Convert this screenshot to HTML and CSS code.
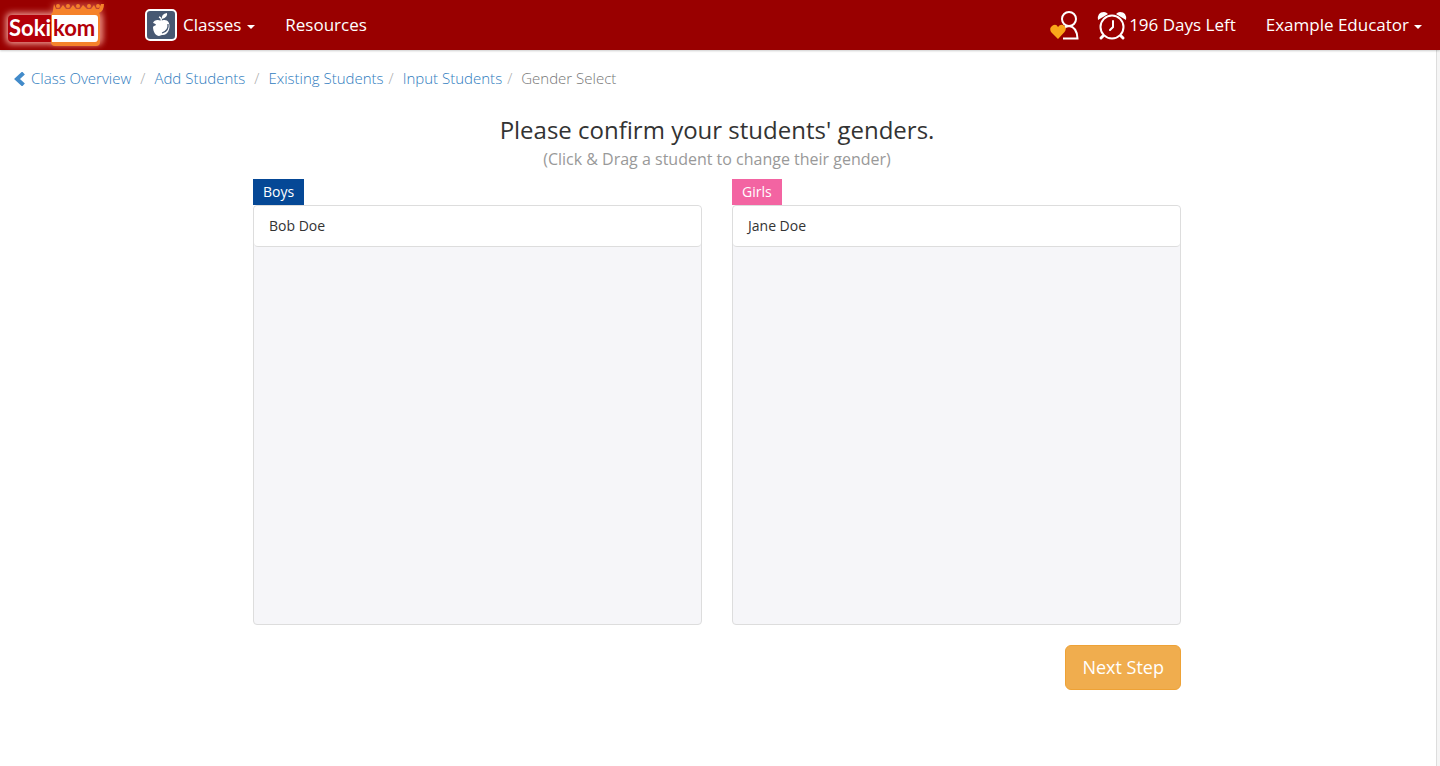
FILE: index.html
```html
<!DOCTYPE html>
<html lang="en">
<head>
  <meta charset="UTF-8" />
  <meta name="viewport" content="width=device-width, initial-scale=1" />
  <title>Sokikom - Gender Select</title>
  <link rel="stylesheet" href="styles.css">
</head>
<body>
  <header class="navbar">
    <a class="brand" href="#" aria-label="Sokikom">
      <svg width="112" height="50" viewBox="0 0 112 50">
        <defs>
          <filter id="glow" x="-20%" y="-40%" width="140%" height="180%">
            <feGaussianBlur stdDeviation="3" />
          </filter>
        </defs>
        <rect x="6" y="13" width="96" height="31" rx="5" fill="#f0a098" filter="url(#glow)" />
        <rect x="52" y="3" width="50" height="42" rx="4" fill="#e0705a" opacity=".6" filter="url(#glow)" />
        <rect x="8" y="15" width="46" height="27" rx="4" fill="#b30009" />
        <rect x="51" y="12" width="49" height="34" rx="4" fill="#f5822a" />
        <!-- row of people on top -->
        <g fill="#f5822a">
          <circle cx="58" cy="6" r="2" /><circle cx="68" cy="6" r="2" /><circle cx="78" cy="6" r="2" /><circle cx="89" cy="6" r="2" /><circle cx="98" cy="6" r="2" />
          <path d="M54 4l2 5h4l3-4 3 4h4l3-4 3 4h4l3-4 4 4h4l3-4 2 4h3l2-5h3q0 7-5 9v3H52z" />
        </g>
        <path d="M52 15h43q3 0 3 3v20q0 4-3 4H52z" fill="#fff" />
        <text class="logo-text" x="9" y="36" fill="#fff">Soki</text>
        <text class="logo-text" x="53" y="36" fill="#b30009">kom</text>
      </svg>
    </a>
    <nav class="menu">
      <a class="menu-link" href="#">
        <svg class="apple" width="32" height="32" viewBox="0 0 32 32">
          <rect x="1" y="1" width="30" height="30" rx="4" fill="#475872" stroke="#fff" stroke-width="2" />
          <path d="M17 10Q16 5 22 4Q23 8 17 10Z" fill="#fff" />
          <path d="M16 12C13 10 9 11 8 14C9 14 11 15 11 16C10 17 8 17 8 18C8 23 11 27 14 27C15 27 16 26 17 26C22 27 26 20 24 14C22 10 18 11 16 12Z" fill="#fff" />
          <path d="M14 8Q17 9 16 12" fill="none" stroke="#fff" stroke-width="1.5" />
          <path d="M23 15Q24 22 17 24" fill="none" stroke="#475872" stroke-width="1.3" />
        </svg>
        Classes <span class="caret"></span>
      </a>
      <a class="menu-link" href="#">Resources</a>
    </nav>
    <div class="account">
      <a class="friends" href="#" aria-label="Invite a friend">
        <svg width="32" height="32" viewBox="0 0 32 32">
          <g fill="none" stroke="#fff" stroke-width="2">
            <circle cx="20" cy="10" r="7" />
            <path d="M14 20Q17 17 20 17Q28 18 28.500 29.500H14" />
          </g>
          <path d="M9 30L2 23Q0 19 3 17Q7 14 9 18Q12 14 15.500 17Q18 20 15.500 23Z" fill="#faa61a" />
        </svg>
      </a>
      <a class="menu-link days" href="#">
        <svg width="30" height="32" viewBox="0 0 30 32">
          <path d="M1 11Q0 3 7 3Q9 3 11 5ZM29 11Q30 3 23 3Q21 3 19 5Z" fill="#fff" />
          <g fill="none" stroke="#fff" stroke-width="2" stroke-linecap="round">
            <circle cx="15" cy="18" r="11.500" />
            <path d="M16 12V18L13 21" />
            <path d="M6 27L4 29M24 27L26 29" stroke-width="3" />
          </g>
        </svg>
        196 Days Left
      </a>
      <a class="menu-link" href="#">Example Educator <span class="caret"></span></a>
    </div>
  </header>

  <main class="page">
    <ol class="breadcrumb">
      <li>
        <a href="#"><svg class="chevron" width="12" height="14" viewBox="0 0 12 14"><path d="M9.500 1L3 7L9.500 13" fill="none" stroke="#428bca" stroke-width="4" /></svg>Class Overview</a>
      </li>
      <li><a href="#">Add Students</a></li>
      <li><a href="#">Existing Students</a></li>
      <li class="tight"><a href="#">Input Students</a></li>
      <li class="tight active">Gender Select</li>
    </ol>

    <h1>Please confirm your students' genders.</h1>
    <p class="hint">(Click &amp; Drag a student to change their gender)</p>

    <div class="genders">
      <div class="columns">
        <section>
          <h2 class="tag boys">Boys</h2>
          <ul class="students">
            <li draggable="true">Bob Doe</li>
          </ul>
        </section>
        <section>
          <h2 class="tag girls">Girls</h2>
          <ul class="students">
            <li draggable="true">Jane Doe</li>
          </ul>
        </section>
      </div>
      <div class="actions">
        <button type="button" class="btn-next">Next Step</button>
      </div>
    </div>
  </main>
</body>
</html>
```
FILE: styles.css
```css
* {
  box-sizing: border-box;
}
body {
  margin: 0;
  min-height: 100vh;
  display: flex;
  flex-direction: column;
  background: #f5f5f5;
  color: #333;
  font-family: 'Open Sans', sans-serif;
  font-size: 14px;
  line-height: 20px;
}
a {
  color: #428bca;
  text-decoration: none;
}
.navbar {
  display: flex;
  align-items: center;
  height: 50px;
  background: #990000;
  box-shadow: 0 1px 2px rgba(0, 0, 0, 0.2);
  z-index: 1;
}
.brand {
  height: 50px;
  margin-right: 33px;
}
.logo-text {
  font-family: Lato, sans-serif;
  font-size: 22px;
  font-weight: 700;
}
.menu,
.account {
  display: flex;
  align-items: center;
  gap: 30px;
}
.account {
  margin-left: auto;
  padding-right: 18px;
}
.menu-link {
  display: flex;
  align-items: center;
  color: #fff;
  font-size: 17px;
}
.apple {
  margin-right: 6px;
}
.caret {
  margin: 4px 0 0 6px;
  border-top: 4px solid #fff;
  border-left: 4px solid transparent;
  border-right: 4px solid transparent;
}
.account .caret {
  margin-left: 5px;
}
.friends {
  height: 32px;
  margin-right: -14px;
}
.days svg {
  margin-right: 2px;
}
.page {
  flex: 1;
  margin-right: 3px;
  padding: 18px 2px 0 0;
  background: #fff;
  border-right: 1px solid #ddd;
}
.breadcrumb {
  display: flex;
  flex-wrap: wrap;
  margin: 0;
  padding: 0 14px;
  list-style: none;
  font-size: 15px;
  font-weight: 300;
}
.breadcrumb a {
  color: #2f7cbe;
}
.breadcrumb li + li::before {
  content: "/";
  padding: 0 9px;
  color: #aaa;
}
.breadcrumb li.tight::before {
  padding-left: 5px;
}
.breadcrumb .active {
  color: #777;
}
.chevron {
  margin-right: 5px;
  vertical-align: -2px;
}
h1 {
  margin: 26px 0 0;
  font-size: 24px;
  font-weight: 400;
  line-height: 32px;
  text-align: center;
}
.hint {
  margin: 1px 0 0;
  color: #999;
  font-size: 16px;
  line-height: 24px;
  text-align: center;
}
.genders {
  width: 66.6667%;
  margin: 8px auto 0;
  padding: 0 14px;
}
.columns {
  display: grid;
  grid-template-columns: 1fr 1fr;
  gap: 30px;
}
.tag {
  width: fit-content;
  margin: 0;
  padding: 3px 10px;
  color: #fff;
  font-size: 14px;
  font-weight: 500;
}
.boys {
  background: #054896;
}
.girls {
  background: #f364a2;
}
.students {
  min-height: 420px;
  margin: 0;
  padding: 0;
  list-style: none;
  background: #f6f6f9;
  border: 1px solid #ddd;
  border-radius: 4px;
}
.students li {
  padding: 10px 15px;
  background: #fff;
  border-bottom: 1px solid #ddd;
  border-radius: 4px;
  cursor: move;
}
.actions {
  display: flex;
  justify-content: flex-end;
  margin-top: 20px;
}
.btn-next {
  padding: 10px 16px;
  color: #fff;
  background: #f0ad4e;
  border: 1px solid #eea236;
  border-radius: 6px;
  font-family: inherit;
  font-size: 18px;
  line-height: 23px;
  cursor: pointer;
}
.btn-next:hover {
  background: #ed9c28;
}
```
